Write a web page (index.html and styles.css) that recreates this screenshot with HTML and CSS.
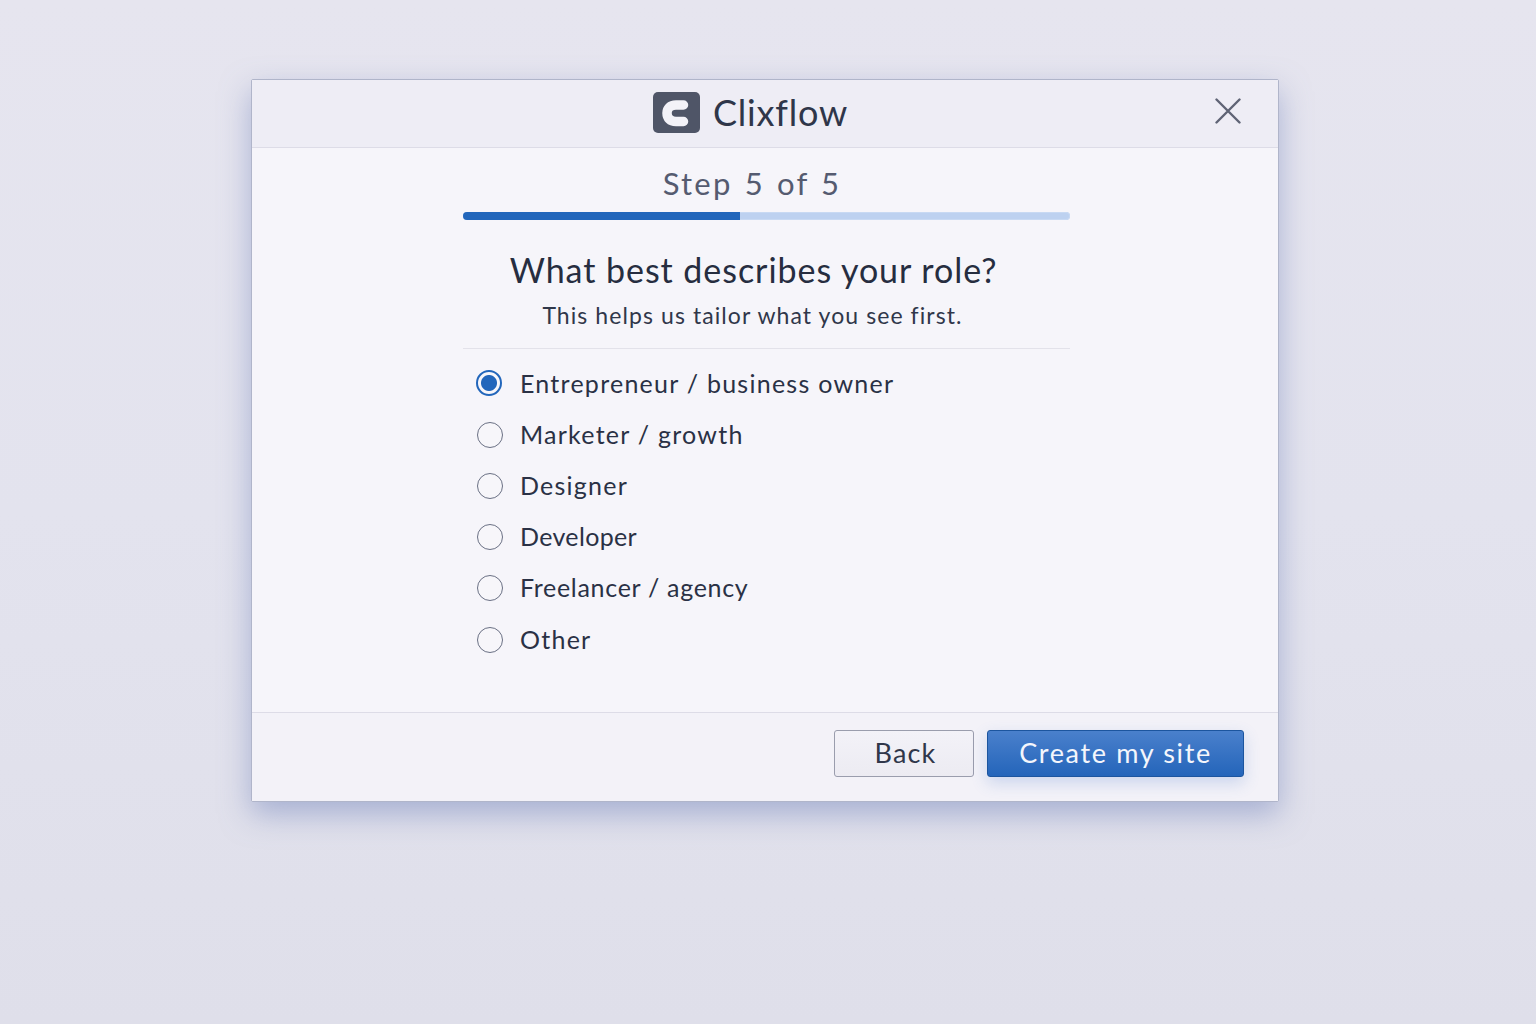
FILE: index.html
```html
<!DOCTYPE html>
<html lang="en">
<head>
<meta charset="utf-8">
<title>Clixflow</title>
<link rel="stylesheet" href="styles.css">
</head>
<body>
<main class="dialog">
  <header class="head">
    <div class="brand">
      <svg class="logo" width="47" height="41" viewBox="0 0 47 41"><rect width="47" height="41" rx="5" fill="#4f5567"/><path d="M30.500 13 H23 C17 13 14 16.500 14 21 C14 26 17 29.500 23 29.500 H30.500" fill="none" stroke="#f3f2f8" stroke-width="9.500" stroke-linecap="round"/></svg>
      <span class="name">Clixflow</span>
    </div>
    <button class="close" aria-label="Close"><svg width="26" height="26" viewBox="0 0 26 26"><path d="M1.500 1.500 L24.500 24.500 M24.500 1.500 L1.500 24.500" stroke="#5f6475" stroke-width="2.400" stroke-linecap="round"/></svg></button>
  </header>
  <section class="body">
    <div class="column">
      <div class="step">Step 5 of 5</div>
      <div class="track"><div class="fill"></div></div>
      <h1 class="title">What best describes your role?</h1>
      <p class="sub">This helps us tailor what you see first.</p>
      <ul class="options">
        <li class="option selected"><span class="radio on"></span>Entrepreneur / business owner</li>
        <li class="option"><span class="radio"></span>Marketer / growth</li>
        <li class="option"><span class="radio"></span>Designer</li>
        <li class="option snug"><span class="radio"></span>Developer</li>
        <li class="option tight"><span class="radio"></span>Freelancer / agency</li>
        <li class="option"><span class="radio"></span>Other</li>
      </ul>
    </div>
  </section>
  <footer class="foot">
    <button class="btn back">Back</button>
    <button class="btn primary">Create my site</button>
  </footer>
</main>
</body>
</html>
```
FILE: styles.css
```css
* { box-sizing: border-box; }
html, body { height: 100%; }
body {
  margin: 0;
  padding: 79px 0 0 251px;
  height: 1024px;
  overflow: hidden;
  background: linear-gradient(180deg, #e6e5ef 0%, #e3e3ee 50%, #dfdfea 100%);
  font-family: Lato, "Open Sans", sans-serif;
  color: #2a3145;
}
.dialog {
  width: 1028px;
  height: 723px;
  display: flex;
  flex-direction: column;
  background: #f6f5fa;
  border: 1px solid #b0b5ca;
  border-radius: 2px;
  box-shadow: 0 12px 30px rgba(110, 128, 185, .5);
}
.head {
  height: 68px;
  flex: none;
  display: flex;
  align-items: center;
  justify-content: center;
  position: relative;
  padding-bottom: 2px;
  background: #eeedf5;
  border-bottom: 1px solid #dddce7;
}
.brand { display: flex; align-items: center; gap: 13px; margin-left: -29px; }
.logo { display: block; }
.name { font-size: 36px; line-height: 41px; color: #2f3649; letter-spacing: .8px; }
.close {
  position: absolute;
  right: 37px;
  top: 18px;
  padding: 0;
  border: 0;
  background: none;
  line-height: 0;
}
.body { flex: 1; padding: 0 208px 0 211px; }
.column { width: 607px; display: flex; flex-direction: column; }
.step {
  margin-top: 17px;
  margin-left: -29px;
  text-align: center;
  font-size: 31px;
  line-height: 36px;
  color: #555b70;
  letter-spacing: 2.200px;
  word-spacing: 2px;
}
.track {
  margin-top: 11px;
  height: 8px;
  border-radius: 4px;
  background: #bdd1f0;
  box-shadow: inset 0 0 0 1px #c8d9f3;
  overflow: hidden;
}
.fill { width: 277px; height: 100%; background: #2266bb; }
.title {
  margin: 30px 0 0 -26px;
  text-align: center;
  font-size: 34px;
  line-height: 40px;
  font-weight: 400;
  color: #262d40;
  letter-spacing: .95px;
}
.sub {
  margin: 10px 0 0 -28px;
  text-align: center;
  font-size: 23px;
  line-height: 30px;
  color: #30374a;
  letter-spacing: 1.080px;
  padding-bottom: 18px;
}
.options {
  list-style: none;
  margin: 0;
  padding: 7.500px 0 0 13px;
  border-top: 1px solid #e3e2ea;
}
.option {
  display: flex;
  align-items: center;
  gap: 18px;
  height: 51.200px;
  font-size: 25px;
  color: #2a3145;
  letter-spacing: 1.250px;
  padding-top: 1px;
}
.snug { letter-spacing: .35px; }
.tight { letter-spacing: .7px; }
.radio {
  flex: none;
  width: 26px;
  height: 26px;
  margin: 2px -1px 0 1px;
  border-radius: 50%;
  border: 1.500px solid #6a7084;
  background: #f7f6fa;
}
.radio.on {
  margin: 0;
  border: 2px solid #2266bb;
  background: radial-gradient(circle, #2266bb 0 7.500px, #f7f6fa 8.500px);
}
.foot {
  height: 89px;
  flex: none;
  display: flex;
  justify-content: flex-end;
  align-items: flex-start;
  gap: 13px;
  padding: 17px 34px 0 0;
  background: #f3f2f8;
  border-top: 1px solid #dddce7;
}
.btn {
  height: 47px;
  font-family: inherit;
  font-size: 27px;
  letter-spacing: 1.200px;
  border-radius: 3px;
  padding: 0 0 3px;
}
.back {
  width: 140px;
  padding-left: 3px;
  color: #30374a;
  background: linear-gradient(180deg, #f3f2f8, #ecebf2);
  border: 1px solid #9a9dad;
}
.primary {
  width: 257px;
  letter-spacing: 1.650px;
  color: #f4f6fc;
  background: linear-gradient(180deg, #4a80cc, #2465ba);
  border: 1px solid #1c559f;
  box-shadow: 0 6px 16px rgba(60, 110, 200, .22);
}
```
